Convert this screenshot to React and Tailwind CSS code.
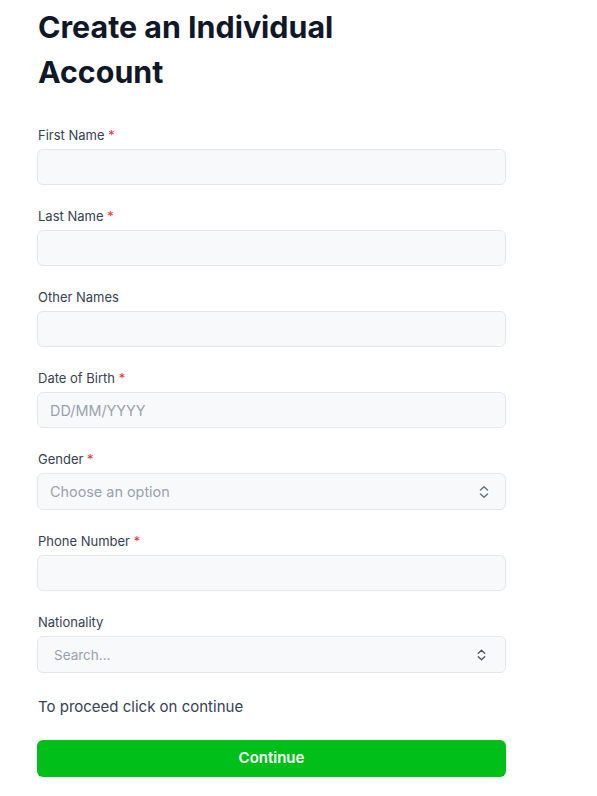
function Chevrons({ className, w = 12, h = 14 }) {
  return (
    <svg
      className={className}
      width={w}
      height={h}
      viewBox="0 0 12 14"
      fill="none"
      stroke="currentColor"
      strokeWidth="1.5"
      strokeLinecap="round"
      strokeLinejoin="round"
    >
      <path d="M2.5 5L6 1.8L9.5 5" />
      <path d="M2.5 9L6 12.2L9.5 9" />
    </svg>
  );
}

function Field({ label, required, placeholder, select, search, tall }) {
  return (
    <div className="mb-[21px]">
      <label className="block text-[13px] leading-5 text-gray-700 mb-1 ml-px">
        {label}
        {required && <span className="text-red-500"> *</span>}
      </label>
      <div className="relative">
        <input
          placeholder={placeholder}
          className={
            "w-full rounded-md border border-gray-200 bg-[#f8f9fb] text-gray-900 placeholder:text-gray-400 outline-none " +
            (search ? "pl-4 text-[13.5px] " : "px-3 text-[14.4px] ") +
            (tall ? "h-[37px]" : "h-9")
          }
        />
        {select && (
          <Chevrons className="absolute right-4 top-1/2 -translate-y-1/2 text-gray-500" />
        )}
        {search && (
          <Chevrons
            className="absolute right-[19px] top-1/2 -translate-y-1/2 text-gray-600"
            w={11}
            h={13}
          />
        )}
      </div>
    </div>
  );
}

export default function App() {
  return (
    <div className="min-h-screen bg-white font-['Inter',sans-serif]">
      <div className="w-[469px] ml-[37px] pt-[5px]">
        <h1 className="text-[30.4px] leading-[45px] font-bold text-gray-900 w-[320px] mb-[30px] ml-px">
          Create an Individual Account
        </h1>
        <Field label="First Name" required />
        <Field label="Last Name" required />
        <Field label="Other Names" />
        <Field label="Date of Birth" required placeholder="DD/MM/YYYY" />
        <Field label="Gender" required placeholder="Choose an option" select tall />
        <Field label="Phone Number" required />
        <Field label="Nationality" placeholder="Search..." search tall />
        <p className="text-[15px] text-gray-700 pt-[2px] mb-[21px] ml-px">To proceed click on continue</p>
        <button className="w-full h-[37px] rounded-md bg-[#00bf19] text-white font-semibold text-[15px]">
          Continue
        </button>
      </div>
    </div>
  );
}
